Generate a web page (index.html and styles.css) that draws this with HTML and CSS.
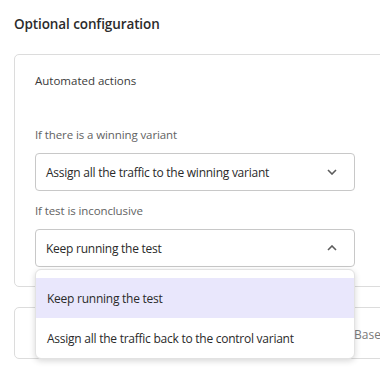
FILE: index.html
```html
<!DOCTYPE html>
<html>
<head>
<meta charset="utf-8">
<link rel="stylesheet" href="styles.css">
</head>
<body>
<div class="page">
  <h2 class="title">Optional configuration</h2>
  <section class="card">
    <div class="card-title">Automated actions</div>
    <div class="field first">
      <div class="label">If there is a winning variant</div>
      <div class="select">
        <span>Assign all the traffic to the winning variant</span>
        <svg class="chev" width="10" height="6" viewBox="0 0 10 6"><path d="M1 1 L5 5 L9 1" fill="none" stroke="#5c5c5c" stroke-width="1.6"/></svg>
      </div>
    </div>
    <div class="field">
      <div class="label">If test is inconclusive</div>
      <div class="select-wrap">
        <div class="select open">
          <span>Keep running the test</span>
          <svg class="chev" width="10" height="6" viewBox="0 0 10 6"><path d="M1 5 L5 1 L9 5" fill="none" stroke="#5c5c5c" stroke-width="1.6"/></svg>
        </div>
        <ul class="menu">
          <li class="option active">Keep running the test</li>
          <li class="option">Assign all the traffic back to the control variant</li>
        </ul>
      </div>
    </div>
  </section>
  <section class="card card2">
    <div class="row">
      <span class="spacer"></span>
      <span class="base">Base</span>
    </div>
  </section>
</div>
</body>
</html>
```

FILE: styles.css
```css
html, body {
  margin: 0;
  padding: 0;
  background: #ffffff;
  overflow: hidden;
}
body {
  font-family: "Open Sans", "Noto Sans", sans-serif;
  color: #303030;
  width: 380px;
  height: 376px;
}
.page {
  padding: 14px 0 0 14px;
}
.title {
  margin: 0;
  font-size: 13.5px;
  font-weight: 600;
  line-height: 20px;
  color: #2b2b2b;
  letter-spacing: -0.1px;
}
.card {
  margin-top: 20px;
  width: 400px;
  border: 1px solid #dcdcdc;
  border-radius: 5px;
  padding: 17px 0 19px 20px;
  box-sizing: border-box;
}
.card-title {
  font-size: 11.5px;
  line-height: 18px;
  color: #3a3a3a;
  font-weight: 500;
}
.field.first {
  margin-top: 36px;
}
.field {
  margin-top: 11px;
}
.label {
  font-size: 11.5px;
  line-height: 17px;
  color: #626262;
  margin-bottom: 10px;
  letter-spacing: -0.1px;
}
.select-wrap {
  position: relative;
  width: 320px;
}
.select {
  width: 320px;
  height: 38px;
  box-sizing: border-box;
  border: 1px solid #c8c8c8;
  border-radius: 4px;
  display: flex;
  align-items: center;
  justify-content: space-between;
  padding: 0 17px 0 10px;
  font-size: 12px;
  letter-spacing: -0.25px;
  color: #2a2a2a;
}
.chev {
  display: block;
}
.menu {
  position: absolute;
  left: 0;
  top: 40px;
  width: 320px;
  box-sizing: border-box;
  margin: 0;
  padding: 8px 0 0;
  list-style: none;
  background: #fff;
  border: 1px solid #e2e2e2;
  border-radius: 6px;
  box-shadow: 0 2px 6px rgba(0, 0, 0, 0.16);
  z-index: 5;
}
.option {
  height: 40px;
  display: flex;
  align-items: center;
  padding-left: 11px;
  font-size: 12px;
  letter-spacing: -0.25px;
  color: #2a2a2a;
}
.option.active {
  background: #e9e7fc;
}
.card2 {
  margin-top: 20px;
  height: 52px;
  padding: 0 0 0 20px;
  display: flex;
  align-items: center;
}
.row {
  display: grid;
  grid-template-columns: 319px auto;
  font-size: 12px;
  color: #7a7a7a;
}
.base {
  margin-top: 2px;
}
```
